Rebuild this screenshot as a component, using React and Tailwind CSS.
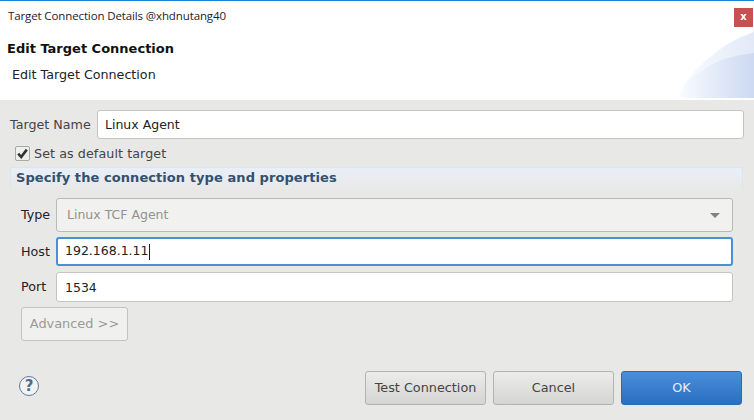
export default function App() {
  return (
    <div className="w-[754px] h-[420px] overflow-hidden bg-[#e8e8e6] font-['DejaVu_Sans',sans-serif] text-[12.7px] text-[#333]">
      <div className="relative h-[100px] bg-white border-t border-[#1a86d8] overflow-hidden">
        <svg className="absolute left-[679px] top-[29px] w-[75px] h-[68px]" viewBox="0 0 75 68">
          <defs>
            <linearGradient id="o" x1="0" x2="1" y1="0" y2="0"><stop offset="0" stopColor="#fbfcff" /><stop offset="1" stopColor="#e2e9f7" /></linearGradient>
            <linearGradient id="i" x1="0" x2="1" y1="0" y2="0"><stop offset="0" stopColor="#f8fafe" /><stop offset="1" stopColor="#ccd9f1" /></linearGradient>
          </defs>
          <path d="M0 68 C3 52 16 39 41 19 C52 11 64 6 75 2 V68 Z" fill="url(#o)" />
          <path d="M9 50 C22 41 32 34 45 29 C55 26 65 24 75 23 V68 H2 C3 60 5 55 9 50 Z" fill="url(#i)" />
        </svg>
        <div className="relative h-[31px] flex items-start justify-between">
          <span className="ml-[8px] mt-[7px] font-['Open_Sans',sans-serif] text-[11.5px] leading-[16px] text-[#1c1c2c] tracking-[-0.12px]">Target Connection Details @xhdnutang40</span>
          <div className="mt-[7px] mr-px w-[19px] h-[19px] bg-[#c75050] text-white text-[10px] leading-[17px] font-bold text-center">x</div>
        </div>
        <div className="relative ml-[7px] mt-[9px] font-bold text-[13px] leading-[16px] text-[#111]">Edit Target Connection</div>
        <div className="relative ml-[12px] mt-[10px] leading-[16px] text-[#222]">Edit Target Connection</div>
      </div>

      <div className="pt-[10px] pl-[10px] pr-[10px]">
        <div className="flex items-center h-[29px]">
          <span className="w-[87px] text-[#444]">Target Name</span>
          <input readOnly value="Linux Agent" className="h-[29px] w-[647px] rounded-[3px] border border-[#c4c4c0] bg-white pl-[7px] pr-[8px] text-[12.5px] text-[#222] outline-none" />
        </div>
        <div className="flex items-center h-[15px] mt-[7px] ml-[5px]">
          <span className="w-[15px] h-[15px] rounded-[2px] border border-[#a9a9a5] bg-[#efefed] flex items-center justify-center">
            <svg viewBox="0 0 13 13" className="w-[13px] h-[13px]"><path d="M2.2 6.6 L5.2 10 L10.8 2.6" fill="none" stroke="#2e3436" strokeWidth="2.6" /></svg>
          </span>
          <span className="ml-[4px] text-[#444] tracking-[0.08px]">Set as default target</span>
        </div>
        <div className="mt-[6px] h-[23px] w-[733px] rounded-t-[3px] border-t border-x border-[#dbe5ef] bg-gradient-to-b from-[#e9eff9] to-[#e8e8e6] pl-[5px] pt-[2px] font-bold text-[13px] leading-[16px] tracking-[0.07px] text-[#33506f]">
          Specify the connection type and properties
        </div>
        <div className="pl-[11px] w-[723px]">
          <div className="flex items-center mt-[8px]">
            <span className="w-[35px] text-[#222]">Type</span>
            <div className="h-[34px] w-[677px] rounded-[3px] border border-[#b9b9b5] bg-[#f1f1f0] flex items-center justify-between pl-[10px] pr-[12px] text-[#92928f]">
              <span className="text-[12.5px]">Linux TCF Agent</span>
              <span className="w-0 h-0 border-x-[5px] border-x-transparent border-t-[5px] border-t-[#828282]" />
            </div>
          </div>
          <div className="flex items-center mt-[5px]">
            <span className="w-[35px] text-[#222]">Host</span>
            <div className="h-[29px] w-[677px] rounded-[3px] border-2 border-[#4a90d9] bg-white flex items-center pl-[7px] text-[#222]">
              <span className="text-[12.5px]">192.168.1.11</span><span className="w-px h-[16px] bg-[#222]" />
            </div>
          </div>
          <div className="flex items-center mt-[6px]">
            <span className="w-[35px] text-[#222]">Port</span>
            <input readOnly value="1534" className="h-[30px] w-[677px] rounded-[3px] border border-[#c4c4c0] bg-white px-[8px] text-[12.5px] text-[#222] outline-none" />
          </div>
          <button className="mt-[5px] block w-[107px] h-[34px] pb-[1px] rounded-[3px] border border-[#c2c2be] bg-[#f0f0ef] text-[12.9px] text-[#9a9a98]">Advanced &gt;&gt;</button>
        </div>
        <div className="flex items-start mt-[30px] h-[34px]">
          <span className="ml-[9px] mt-[5px] w-[20px] h-[20px] rounded-full border-[1.5px] border-[#5f7a9e] bg-[#f3f3f2] flex items-center justify-center font-bold text-[15px] leading-none text-[#4c6a92]">?</span>
          <button className="ml-[326px] w-[121px] h-[34px] pb-[1px] rounded-[3px] border border-[#b3b3b0] bg-gradient-to-b from-[#ececea] to-[#d4d4d2] text-[12.8px] text-[#444]">Test Connection</button>
          <button className="ml-[7px] w-[121px] h-[34px] pb-[1px] rounded-[3px] border border-[#b3b3b0] bg-gradient-to-b from-[#ececea] to-[#d4d4d2] text-[12.8px] text-[#444]">Cancel</button>
          <button className="ml-[7px] w-[121px] h-[34px] pb-[1px] rounded-[3px] border border-[#2a6cb3] bg-gradient-to-b from-[#4a8fdb] to-[#2a6fc0] text-[12.8px] text-[#e8eef6]">OK</button>
        </div>
      </div>
    </div>
  );
}
